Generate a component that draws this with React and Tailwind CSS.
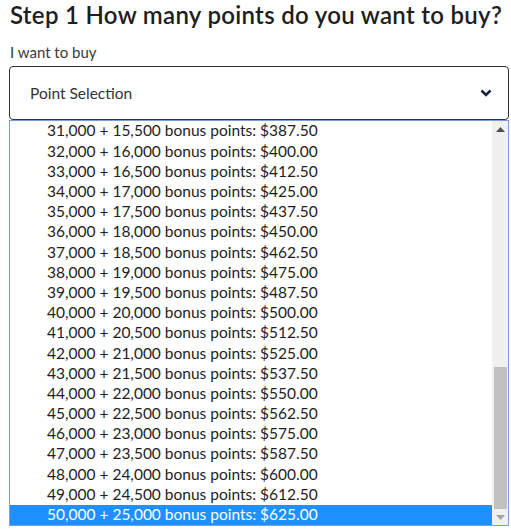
import React from "react";

const rows = [];
for (let i = 0; i < 20; i++) {
  const base = 31000 + i * 1000;
  const bonus = base / 2;
  const price = (base * 0.0125).toFixed(2);
  rows.push(`${base.toLocaleString("en-US")} + ${bonus.toLocaleString("en-US")} bonus points: $${price}`);
}

export default function App() {
  return (
    <div className="w-[511px] h-[529px] bg-white overflow-hidden" style={{ fontFamily: "Lato, 'Noto Sans', sans-serif" }}>
      <div className="pl-[9px] pr-[2px] pt-0">
        <h1 className="text-[24px] leading-[30px] font-semibold text-[#1e1e1e] pl-[1px] tracking-[0.3px] whitespace-nowrap">
          Step 1 How many points do you want to buy?
        </h1>
        <div className="mt-[12px] text-[15px] leading-[20px] text-[#3a3a3a] pl-[1px]">I want to buy</div>
        <div className="mt-[4px] w-[500px] h-[54px] border border-[#333] rounded-[4px] flex items-center justify-between pl-[20px] pr-[16px]">
          <span className="text-[15.5px] text-[#333] pt-[1px]">Point Selection</span>
          <svg width="12" height="8" viewBox="0 0 12 8">
            <path d="M1.5 1.5 L6 6 L10.5 1.5" fill="none" stroke="#1b2340" strokeWidth="2.6" />
          </svg>
        </div>
        <div className="w-[500px] h-[406px] border border-[#7b9fd8] flex">
          <div className="flex-1 overflow-hidden">
            {rows.map((r, i) => (
              <div
                key={i}
                className={`h-[20.2px] flex items-center pl-[37px] text-[15.5px] whitespace-nowrap ${i === 19 ? "bg-[#1e90ff] text-white" : "text-[#1e1e1e]"}`}
              >
                {r}
              </div>
            ))}
          </div>
          <div className="w-[16px] bg-[#f0f0f0] flex flex-col items-center">
            <div className="h-[17px] flex items-center justify-center">
              <svg width="9" height="5" viewBox="0 0 9 5"><path d="M0 5 L4.5 0 L9 5 Z" fill="#505050" /></svg>
            </div>
            <div className="flex-1" />
            <div className="w-[13px] h-[142px] bg-[#c1c1c1]" />
            <div className="h-[16px] flex items-center justify-center">
              <svg width="9" height="5" viewBox="0 0 9 5"><path d="M0 0 L9 0 L4.5 5 Z" fill="#a3a3a3" /></svg>
            </div>
          </div>
        </div>
      </div>
    </div>
  );
}
